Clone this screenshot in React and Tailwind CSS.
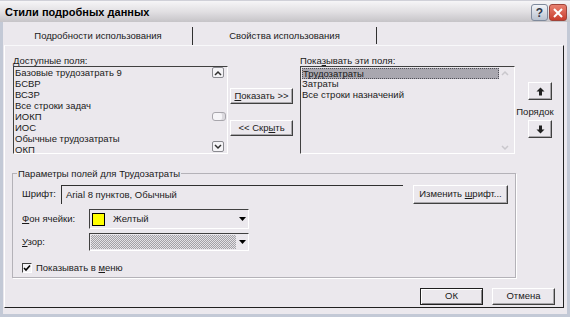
import React from "react";

const leftFields = [
  "Базовые трудозатрать 9",
  "БСВР",
  "ВСЗР",
  "Все строки задач",
  "ИОКП",
  "ИОС",
  "Обычные трудозатраты",
  "ОКП",
];

const rightFields = ["Трудозатраты", "Затраты", "Все строки назначений"];

const Btn = ({ children, className = "" }) => (
  <div
    className={`flex items-center justify-center border border-t-white border-l-white border-r-[#404040] border-b-[#404040] shadow-[inset_-1px_-1px_0_#a9a7ab] ${className}`}
  >
    {children}
  </div>
);

const ScrollBtn = ({ dir, faint }) => (
  <div
    className={`flex h-[11px] w-[12px] items-center justify-center rounded-[2px] ${
      faint ? "" : "border border-[#8a8a90] bg-[#f4f3f6]"
    }`}
  >
    <svg width="8" height="6" viewBox="0 0 8 6">
      <path
        d={dir === "up" ? "M1 5 L4 2 L7 5" : "M1 1 L4 4 L7 1"}
        fill="none"
        stroke={faint ? "#c9c7cc" : "#303030"}
        strokeWidth="1.5"
      />
    </svg>
  </div>
);

const OrderArrow = ({ dir }) => (
  <svg width="9" height="9" viewBox="0 0 9 9">
    <path
      d={dir === "up" ? "M4.5 0.5 L8.5 4.5 L6 4.5 L6 8.5 L3 8.5 L3 4.5 L0.5 4.5 Z" : "M4.5 8.5 L8.5 4.5 L6 4.5 L6 0.5 L3 0.5 L3 4.5 L0.5 4.5 Z"}
      fill="#202020"
    />
  </svg>
);

const DropArrow = () => (
  <div className="flex h-full w-[12px] items-center justify-center">
    <svg width="7" height="4" viewBox="0 0 7 4">
      <path d="M0 0 L7 0 L3.5 4 Z" fill="#000" />
    </svg>
  </div>
);

export default function App() {
  return (
    <div className="flex h-[317px] w-[570px] flex-col overflow-hidden bg-[#ebe8ed] font-['Liberation_Sans',Arial,sans-serif] text-[9.5px] text-[#1a1a1a]">
      {/* Title bar */}
      <div className="flex h-[22px] items-start bg-gradient-to-b from-[#f6f5f7] via-[#e2e0e3] to-[#c6c4c8] border-t border-[#d0d0d8]">
        <div className="ml-[5px] mt-[4px] text-[11px] font-bold leading-[14px] text-black">Стили подробных данных</div>
        <div className="ml-auto mr-[3px] mt-[3px] flex gap-[1px]">
          <div className="flex h-[17px] w-[17px] items-center justify-center rounded-[3px] border border-[#7f8a9c] bg-gradient-to-b from-[#f2f4f8] to-[#b9c2d0] text-[12px] font-bold leading-none text-[#303848]">
            ?
          </div>
          <div className="flex h-[17px] w-[18px] items-center justify-center rounded-[3px] border border-[#a0443a] bg-gradient-to-b from-[#e88070] to-[#c83c2c]">
            <svg width="10" height="10" viewBox="0 0 10 10">
              <path d="M1 1 L9 9 M9 1 L1 9" stroke="#fff" strokeWidth="2" />
            </svg>
          </div>
        </div>
      </div>

      {/* Body */}
      <div className="flex flex-1 flex-col border-x-[3px] border-b-[3px] border-[#c3c9d6]">
        {/* Tabs */}
        <div className="flex h-[23px] pl-[1px]">
          <div className="mt-[5px] flex w-[189px] items-center justify-center border-r border-[#303030] pt-[1px]">
            Подробности использования
          </div>
          <div className="mt-[5px] mb-[1px] flex w-[184px] items-center justify-center border-r border-[#303030] pt-[1px]">
            Свойства использования
          </div>
        </div>

        {/* Frame */}
        <div className="ml-[1px] flex h-[263px] w-[560px] flex-col border border-l-white border-t-[#f8f8fa] border-r-[#202020] border-b-[#202020] px-[8px] pt-[10px]">
          {/* Top row */}
          <div className="flex">
            <div className="flex w-[215px] flex-col">
              <div className="h-[10px] leading-[10px]">
                <span className="underline">Д</span>оступные поля:
              </div>
              <div className="flex h-[88px] border border-t-[#404040] border-l-[#404040] border-r-white border-b-white">
                <div className="flex-1 pl-[1px]">
                  {leftFields.map((f) => (
                    <div key={f} className="h-[11px] leading-[11px] whitespace-nowrap">
                      {f}
                    </div>
                  ))}
                </div>
                <div className="flex w-[15px] flex-col">
                  <ScrollBtn dir="up" />
                  <div className="mt-[34px] h-[9px] w-[14px] rounded-[3px] border border-[#a8a6ac] bg-[#f6f5f8] shadow-[inset_-3px_0_0_#dcdadf]" />
                  <div className="mt-[20px]">
                    <ScrollBtn dir="down" />
                  </div>
                </div>
              </div>
            </div>

            <div className="ml-[2px] flex w-[63px] flex-col">
              <Btn className="mt-[32px] h-[16px]">
                <span>
                  <span className="underline">П</span>оказать &gt;&gt;
                </span>
              </Btn>
              <Btn className="mt-[16px] h-[16px]">
                <span>
                  &lt;&lt; Скр<span className="underline">ы</span>ть
                </span>
              </Btn>
            </div>

            <div className="ml-[7px] flex w-[215px] flex-col">
              <div className="h-[10px] leading-[10px]">
                Пока<span className="underline">з</span>ывать эти поля:
              </div>
              <div className="flex h-[88px] border border-t-[#404040] border-l-[#404040] border-r-white border-b-white">
                <div className="flex-1 pl-[1px] pt-[1px]">
                  {rightFields.map((f, i) => (
                    <div
                      key={f}
                      className={`h-[11px] leading-[10px] whitespace-nowrap ${
                        i === 0 ? "border border-dotted border-[#505058] bg-[#a9a7af] leading-[9px]" : ""
                      }`}
                    >
                      {f}
                    </div>
                  ))}
                </div>
                <div className="flex w-[15px] flex-col pt-[2px]">
                  <ScrollBtn dir="up" faint />
                  <div className="mt-[65px]">
                    <ScrollBtn dir="down" faint />
                  </div>
                </div>
              </div>
            </div>

            <div className="flex w-[40px] flex-col items-center">
              <Btn className="ml-[10px] mt-[26px] h-[18px] w-[24px]">
                <OrderArrow dir="up" />
              </Btn>
              <div className="mt-[5px] h-[14px] leading-[14px]">Порядок</div>
              <Btn className="ml-[10px] mt-[1px] h-[18px] w-[24px]">
                <OrderArrow dir="down" />
              </Btn>
            </div>
          </div>

          {/* Group box */}
          <div className="relative -ml-[1px] mt-[19px] h-[105px] w-[504px] border border-[#b4b2b8] shadow-[1px_1px_0_#fff] pl-[9px] pt-[11px]">
            <div className="absolute -top-[6px] left-[4px] bg-[#ebe8ed] px-[1px] leading-[11px]">
              Параметры полей для Трудозатраты
            </div>

            <div className="flex h-[19px] items-center">
              <div className="w-[39px]">Шрифт:</div>
              <div className="flex h-[19px] w-[342px] items-center border-t border-l border-[#303030] pl-[4px]">
                Arial 8 пунктов, Обычный
              </div>
              <Btn className="ml-[10px] h-[19px] w-[95px]">
                <span>
                  Изменить <span className="underline">ш</span>рифт...
                </span>
              </Btn>
            </div>

            <div className="mt-[5px] flex h-[20px] items-center">
              <div className="w-[67px]">
                <span className="underline">Ф</span>он ячейки:
              </div>
              <div className="flex h-[20px] w-[160px] items-center border border-t-[#404040] border-l-[#404040] border-r-white border-b-white">
                <div className="ml-[2px] h-[13px] w-[13px] border border-black bg-[#ffff00]" />
                <div className="ml-[8px] flex-1">Желтый</div>
                <DropArrow />
              </div>
            </div>

            <div className="mt-[4px] flex h-[18px] items-center">
              <div className="w-[67px]">
                <span className="underline">У</span>зор:
              </div>
              <div className="flex h-[18px] w-[160px] items-center border border-t-[#404040] border-l-[#404040] border-r-white border-b-white">
                <div className="ml-[1px] h-[14px] flex-1 bg-[repeating-conic-gradient(#a3a1a6_0_25%,#e4e2e6_0_50%)] bg-[length:2px_2px]" />
                <DropArrow />
              </div>
            </div>

            <div className="mt-[10px] flex items-center">
              <div className="flex h-[10px] w-[10px] items-center justify-center border border-t-[#404040] border-l-[#404040] border-r-white border-b-white bg-[#f4f3f6]">
                <svg width="8" height="8" viewBox="0 0 8 8">
                  <path d="M1 4 L3 6 L7 1.5" fill="none" stroke="#000" strokeWidth="1.6" />
                </svg>
              </div>
              <div className="ml-[4px]">
                Показывать в <span className="underline">м</span>еню
              </div>
            </div>
          </div>

          {/* Bottom buttons */}
          <div className="mt-[10px] flex justify-end gap-[9px]">
            <div className="flex h-[17px] w-[63px] items-center justify-center border border-[#202020] shadow-[inset_1px_1px_0_#fff,inset_-1px_-1px_0_#8a888c]">
              ОК
            </div>
            <Btn className="h-[17px] w-[63px]">Отмена</Btn>
          </div>
        </div>
      </div>
    </div>
  );
}
